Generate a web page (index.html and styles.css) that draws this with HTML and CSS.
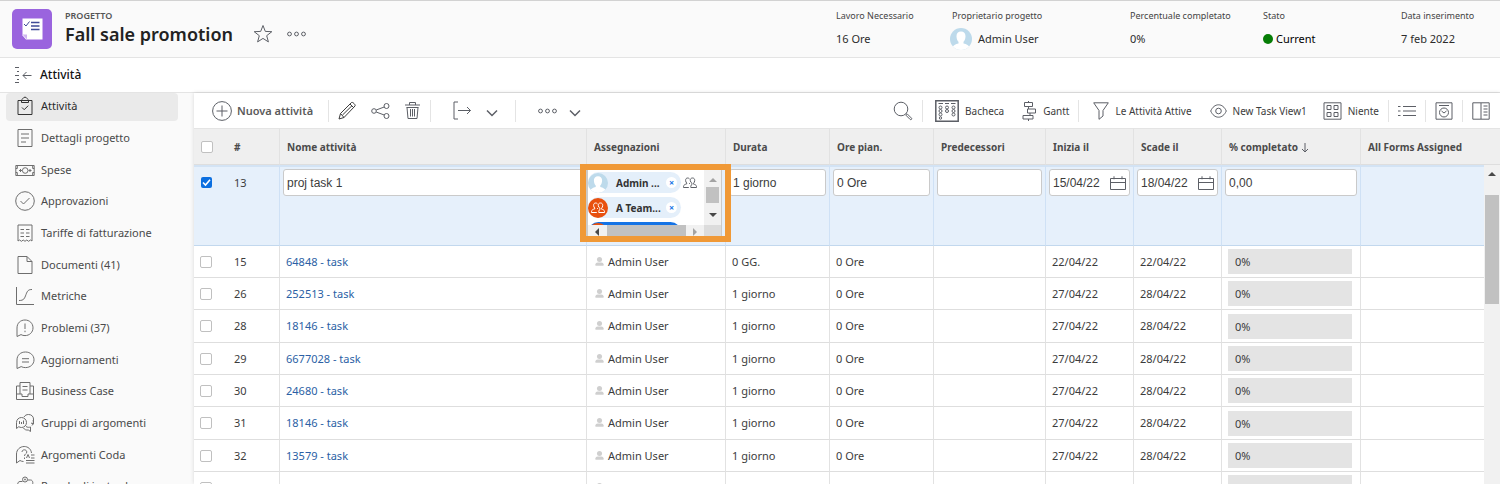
FILE: index.html
```html
<!DOCTYPE html>
<html lang="it">
<head>
<meta charset="utf-8">
<title>Fall sale promotion</title>
<link rel="stylesheet" href="styles.css">
</head>
<body>
<svg class="sprite" aria-hidden="true">
  <symbol id="person" viewBox="0 0 10 10"><circle cx="5" cy="2.8" r="2.8"/><path d="M.5 9.600V8Q.5 6.600 3 6.200h4q2.500.4 2.500 1.800v1.600z"/></symbol>
  <symbol id="avatar" viewBox="0 0 22 22"><defs><clipPath id="disc"><circle cx="11" cy="11" r="11"/></clipPath></defs><g clip-path="url(#disc)"><path fill="#bddaeb" d="M0 0h22v22H0z"/><path fill="#fff" d="M11 3.500c3 0 4.600 2 4.500 5-.1 2.600-1 4.300-2 5.300v1.600c3 .6 5.500 2 6.500 4.600V23H2v-3c1-2.600 3.500-4 6.500-4.600v-1.600c-1-1-1.900-2.700-2-5.300-.1-3 1.500-5 4.500-5z"/></g></symbol>
  <symbol id="team" viewBox="0 0 14 12"><path d="M9.500 1c1.600 0 2.300 1.100 2.200 2.600-.1 1.300-.6 2.100-1.200 2.700v.8c1.600.4 2.800 1 3 2.200v1.200H7.800V9.300C8 8.200 8.600 7.500 9 7.200v-.9C8 5.700 7.400 4.900 7.300 3.600 7.200 2.100 7.900 1 9.500 1zM6.500 1.900C6 1.300 5.400 1 4.700 1 3.200 1 2.500 2.100 2.600 3.500c.1 1.200.5 1.900 1.100 2.500v.9C2 7.300.7 8 .5 9.300v1.200h5.300M6.900 6.700l-.9-.5"/></symbol>
  <symbol id="calendar" viewBox="0 0 16 14"><path d="M.5 2.500h15v11H.5zM.5 6.500h15M4 .3v3M12 .3v3"/></symbol>
  <symbol id="chevron" viewBox="0 0 12 8"><path d="M1 1.500l5 5 5-5"/></symbol>
  <symbol id="dots" viewBox="0 0 19 6"><circle cx="2.500" cy="3" r="1.900"/><circle cx="9.500" cy="3" r="1.900"/><circle cx="16.500" cy="3" r="1.900"/></symbol>
</svg>

<header class="project">
  <svg class="logo" viewBox="0 0 40 40"><rect width="40" height="40" rx="5" fill="#9a64de"/><path d="M10.500 9.500h20v21H14l-3.500-4z" fill="#fff"/><path d="M10.500 25.500h4.500v5z" fill="#cfb5ef"/><path d="M12 15l2 2 3.500-4.500" fill="none" stroke="#3e4a96" stroke-width="1"/><path d="M19 13.500h8.500M19 17h8.500M19 20.500h8.500" stroke="#3e4a96" stroke-width="1.500"/></svg>
  <div class="heading">
    <div class="kind">PROGETTO</div>
    <h1>Fall sale promotion</h1>
  </div>
  <button class="plain star" aria-label="Preferito"><svg class="ic" width="20" height="20" viewBox="0 0 20 20"><path d="M10 1.500l2.300 5.900 6.500.3-5.100 4 1.700 6.200-5.400-3.500-5.400 3.500 1.700-6.200-5.100-4 6.500-.3z"/></svg></button>
  <button class="plain" aria-label="Altro"><svg class="ic" width="19" height="6"><use href="#dots"/></svg></button>
  <dl class="facts">
    <div><dt>Lavoro Necessario</dt><dd>16 Ore</dd></div>
    <div><dt>Proprietario progetto</dt><dd><svg class="face" width="22" height="22"><use href="#avatar"/></svg>Admin User</dd></div>
    <div><dt>Percentuale completato</dt><dd>0%</dd></div>
    <div><dt>Stato</dt><dd class="black"><span class="status"></span>Current</dd></div>
    <div><dt>Data inserimento</dt><dd>7 feb 2022</dd></div>
  </dl>
</header>

<div class="section">
  <button class="plain" aria-label="Comprimi"><svg class="ic" width="18" height="18" viewBox="0 0 18 18"><path d="M1 1.500h4M3 5.500h2M1 9.500h4M3 13.500h2M1 16.500h4M17.500 9.500H9M12.500 6L9 9.500l3.500 3.500"/></svg></button>
  <h2>Attività</h2>
</div>

<div class="workspace">
  <nav class="side">
    <a class="current" href="#"><svg class="ic" viewBox="0 0 20 20"><path d="M3 4.500h14v14H3zM6.500 4.500C6.500 3 8 3 8.200 2.300 8.500.8 11.500.8 11.800 2.300 12 3 13.500 3 13.500 4.500v2h-7zM7 11.500l2.200 2.200 4-4"/></svg>Attività</a>
    <a href="#"><svg class="ic" viewBox="0 0 20 20"><path d="M3 1.500h14v17H3zM6 6h8M6 10h8M6 14h5"/></svg>Dettagli progetto</a>
    <a href="#"><svg class="ic" viewBox="0 0 20 20"><path d="M.8 5.500h18.400v10H.8zM.8 8.500h1.500V5.500M17.700 5.500v3h1.500M.8 12.500h1.500v3M17.700 15.500v-3h1.500M4 10.500h3M5.500 9v3M13.500 10.500h3M15 9v3"/><circle cx="10.200" cy="10.500" r="2.800"/></svg>Spese</a>
    <a href="#"><svg class="ic" viewBox="0 0 20 20"><circle cx="10" cy="10" r="9.300"/><path d="M5.500 10l3 3 6-6"/></svg>Approvazioni</a>
    <a href="#"><svg class="ic" viewBox="0 0 20 20"><path d="M3 18V2h14v16l-1.500-1-2 1.300-1.700-1.300-1.800 1.300L8.200 17l-1.700 1.300-2-1.300zM5.500 6.500H9M11 6.500h3.500M5.500 10H9M11 10h3.500M5.500 13.500H9M11 13.500h3.500"/></svg>Tariffe di fatturazione</a>
    <a href="#"><svg class="ic" viewBox="0 0 20 20"><path d="M3 1.500h9l5 5v12H3zM12 1.500v5h5"/></svg>Documenti (41)</a>
    <a href="#"><svg class="ic" viewBox="0 0 20 20"><path d="M1.500 1v17.500H19M4 14.500c5 0 5.500-2 7-6s2.500-5 6-5"/></svg>Metriche</a>
    <a href="#"><svg class="ic" viewBox="0 0 20 20"><path d="M2 18.500V10c0-5 3.500-8 8-8s8 3.300 8 7.800-3.500 7.800-8 7.800c-1.500 0-2.800-.3-4-1zM10 5.500V11M10 12.700v1.500"/></svg>Problemi (37)</a>
    <a href="#"><svg class="ic" viewBox="0 0 20 20"><path d="M2 18.500V10c0-5 3.700-8 8.500-8s8.500 3.300 8.500 7.800-3.700 7.800-8.500 7.800c-1.600 0-3-.3-4.300-1zM7 8.700h7M7 12h7"/></svg>Aggiornamenti</a>
    <a href="#"><svg class="ic" viewBox="0 0 20 20"><path d="M5 13V1.500h10V13M5 5H1.500v13.500h17V5H15M1.500 13h5.500v2.500h6V13h5.500M7.500 5.500h5M7.500 9h5"/></svg>Business Case</a>
    <a href="#"><svg class="ic" viewBox="0 0 20 20"><path d="M1.500 15.500V9.500c0-3 2.300-5 5-5s5 2.200 5 5-2.200 5-5 5c-1 0-1.900-.3-2.700-.8zM9 4c1-1.700 2.500-2.500 4.500-2.500 3 0 5 2 5 4.500v5l-2.500-1M18 7c.5.600.7 4-1 5.500M11 13.500c1.500 1 3 1 4.500.5l0 4.500-2.200-1.500c-2 .3-3.800-.3-4.800-2M4.500 8v3M6.500 9v2M8.500 7.500V11"/></svg>Gruppi di argomenti</a>
    <a href="#"><svg class="ic" viewBox="0 0 20 20"><path d="M16.500 8C16 4 13 1.500 9.200 1.500 5 1.500 1.500 4.700 1.500 9v9l3.500-2.500c1 .6 2.200 1 3.500 1M7 7c0-3 4.800-2.800 4.800 0 0 2-2.300 1.800-2.300 4M9.500 12.500V14M11.500 13l1.500-3.500 1.500 3.500M16 10h3.500M16 13h3.500M11 15.500h8.500M11 18h8.500"/></svg>Argomenti Coda</a>
    <a href="#"><svg class="ic" viewBox="0 0 20 20"><circle cx="10" cy="3.500" r="2.500"/><circle cx="10" cy="3.500" r=".6"/><path d="M7.500 5.500H5c-3 0-3 5 0 5h9M12.500 4h3c3 0 3 5 .5 6"/></svg>Regole di instradam</a>
  </nav>

  <main class="content">
    <div class="toolbar">
      <button class="plain add"><svg class="ic" width="20" height="20" viewBox="0 0 20 20"><circle cx="10" cy="10" r="9.400"/><path d="M10 4.500v11M4.500 10h11"/></svg>Nuova attività</button>
      <span class="rule"></span>
      <div class="set edit">
        <button class="plain" aria-label="Modifica"><svg class="ic dark" width="19" height="19" viewBox="0 0 19 19"><path d="M1 18l1.500-5.500L13.500 1.500c1-1 4.500 2.500 3.500 3.500L6 16.500zM2.500 12.500L6 16.500M12 3l3.700 3.700M4.500 14L14 4.700"/></svg></button>
        <button class="plain" aria-label="Condividi"><svg class="ic" width="19" height="18" viewBox="0 0 19 18"><circle cx="3" cy="9" r="2.300"/><circle cx="15.500" cy="4" r="2.500"/><circle cx="15.500" cy="14" r="2.500"/><path d="M5.200 8l8-3M5.200 10l8 3"/></svg></button>
        <button class="plain" aria-label="Elimina"><svg class="ic" width="17" height="19" viewBox="0 0 17 19"><path d="M1 4h15M5.500 4V1.500h6V4M2.500 6.500h12M3 6.500l1 11h9l1-11M6.500 8v7.500M8.500 8v7.500M10.500 8v7.500"/></svg></button>
      </div>
      <span class="rule"></span>
      <div class="set export">
        <button class="plain" aria-label="Esporta"><svg class="ic" width="19" height="19" viewBox="0 0 19 19"><path d="M5 1H1v17h4M5 9.500h12.500M14 6l3.500 3.500L14 13"/></svg></button>
        <button class="plain low" aria-label="Opzioni esportazione"><svg class="ic strong" width="12" height="8"><use href="#chevron"/></svg></button>
      </div>
      <span class="rule"></span>
      <div class="set more">
        <button class="plain" aria-label="Altro"><svg class="ic" width="19" height="6"><use href="#dots"/></svg></button>
        <button class="plain low" aria-label="Altre opzioni"><svg class="ic strong" width="12" height="8"><use href="#chevron"/></svg></button>
      </div>

      <div class="views">
        <button class="plain" aria-label="Cerca"><svg class="ic" width="20" height="20" viewBox="0 0 20 20"><circle cx="8" cy="8" r="6.800"/><path d="M13 13.500l1-.8 4.500 4.500c.8.800-.5 2-1.300 1.300L12.700 14z"/></svg></button>
        <span class="rule"></span>
        <button class="plain board"><svg class="ic" width="24" height="22" viewBox="0 0 24 22"><path class="fat" d="M.8.800h22.400v20.400H.8z"/><path d="M3.500 3.500h4.500M10 3.500h4M16 3.500h4.500"/><circle cx="5.500" cy="7.500" r="1.500"/><circle cx="5.500" cy="11" r="1.500"/><circle cx="5.500" cy="14.500" r="1.500"/><circle cx="5.500" cy="18" r="1.200"/><circle cx="12" cy="7.500" r="1.500"/><circle cx="12" cy="11" r="1.500"/><circle cx="18.500" cy="7.500" r="1.500"/><circle cx="18.500" cy="11" r="1.500"/><circle cx="18.500" cy="14.500" r="1.500"/></svg>Bacheca</button>
        <button class="plain gantt"><svg class="ic" width="15" height="20" viewBox="0 0 15 20"><path d="M2.500 1.500h8v4h-8zM5.500 8h8v4h-8zM1 14.500h10v3.500H1zM6.500 5.500V8M8 12v2.500M6.500 0v1.500M6.500 18v2"/></svg>Gantt</button>
        <span class="rule"></span>
        <button class="plain filter"><svg class="ic" width="16" height="18" viewBox="0 0 16 18"><path d="M.7.800h14.600L10 8.500v5.500l-4 3.300V8.500z"/></svg>Le Attività Attive</button>
        <button class="plain eye"><svg class="ic" width="17" height="14" viewBox="0 0 17 14"><path d="M.7 7C2.500 3 5.300.8 8.500.8S14.500 3 16.300 7c-1.800 4-4.600 6.200-7.800 6.200S2.500 11 .7 7z"/><circle cx="8.500" cy="7" r="2.800"/></svg>New Task View1</button>
        <button class="plain group"><svg class="ic" width="19" height="18" viewBox="0 0 19 18"><path d="M1 .8h17v16.400H1zM4 3.500h4v4H4zM11 3.500h4v4h-4zM4 10.500h4v4H4zM11 10.500h4v4h-4z"/></svg>Niente</button>
        <span class="rule"></span>
        <button class="plain" aria-label="Elenco"><svg class="ic" width="18" height="12" viewBox="0 0 18 12"><path d="M0 1.500h2.500M0 6h2.500M0 10.500h2.500M5 1.500h13M5 6h13M5 10.500h13"/></svg></button>
        <span class="rule"></span>
        <button class="plain" aria-label="Linea temporale"><svg class="ic" width="18" height="18" viewBox="0 0 18 18"><path d="M1 .8h16v16.400H1zM4 3.500h10M6.500 9l2.500 2 2.500-2"/><circle cx="9" cy="10.500" r="4.500"/></svg></button>
        <span class="rule"></span>
        <button class="plain" aria-label="Riepilogo"><svg class="ic" width="18" height="18" viewBox="0 0 18 18"><path d="M.8.800h16.400v16.400H.8zM9 1v16M11.500 4h4M11.500 7h4M11.500 10h4M11.500 13h4"/></svg></button>
      </div>
    </div>

    <div class="sheet">
      <table>
        <colgroup><col class="c-check"><col class="c-num"><col><col class="c-assign"><col class="c-dur"><col class="c-dur"><col class="c-pred"><col class="c-date"><col class="c-date"><col class="c-pct"><col class="c-form"></colgroup>
        <thead>
          <tr><th><input type="checkbox" aria-label="Seleziona tutto"></th><th>#</th><th>Nome attività</th><th>Assegnazioni</th><th>Durata</th><th>Ore pian.</th><th>Predecessori</th><th>Inizia il</th><th>Scade il</th><th>% completato <svg class="ic sort" width="8" height="10" viewBox="0 0 8 10"><path d="M4 0v9M1 6l3 3 3-3"/></svg></th><th>All Forms Assigned</th></tr>
        </thead>
        <tbody>
          <tr class="editing">
            <td><input type="checkbox" checked aria-label="Seleziona 13"></td>
            <td>13</td>
            <td><input class="field name" type="text" value="proj task 1" aria-label="Nome attività"></td>
            <td class="assign">
              <div class="callout">
                <div class="picker">
                  <div class="chips">
                    <div class="line"><span class="chip"><svg class="badge" width="20" height="20"><use href="#avatar"/></svg><b>Admin ...</b><button class="remove" aria-label="Rimuovi Admin">×</button></span><svg class="ic" width="14" height="12"><use href="#team"/></svg></div>
                    <div class="line"><span class="chip"><span class="badge red"><svg class="ic" width="14" height="12"><use href="#team"/></svg></span><b>A Team...</b><button class="remove" aria-label="Rimuovi A Team">×</button></span></div>
                    <div class="line"><span class="chip picked"><span class="badge red"></span></span></div>
                  </div>
                  <div class="vbar"><i class="up dim"></i><i class="thumb"></i><i class="down"></i></div>
                  <div class="hbar"><i class="left"></i><i class="thumb"></i><i class="right dim"></i></div>
                  <div class="corner"></div>
                </div>
              </div>
            </td>
            <td><input class="field" type="text" value="1 giorno" aria-label="Durata"></td>
            <td><input class="field" type="text" value="0 Ore" aria-label="Ore pianificate"></td>
            <td><input class="field" type="text" aria-label="Predecessori"></td>
            <td><div class="date"><input class="field" type="text" value="15/04/22" aria-label="Inizia il"><svg class="ic" width="16" height="14"><use href="#calendar"/></svg></div></td>
            <td><div class="date"><input class="field" type="text" value="18/04/22" aria-label="Scade il"><svg class="ic" width="16" height="14"><use href="#calendar"/></svg></div></td>
            <td><input class="field" type="text" value="0,00" aria-label="% completato"></td>
            <td></td>
          </tr>
          <tr><td><input type="checkbox" aria-label="Seleziona 15"></td><td>15</td><td><a href="#">64848 - task</a></td><td><svg class="user" width="9" height="9"><use href="#person"/></svg>Admin User</td><td>0 GG.</td><td>0 Ore</td><td></td><td>22/04/22</td><td>22/04/22</td><td><div class="bar">0%</div></td><td></td></tr>
          <tr><td><input type="checkbox" aria-label="Seleziona 26"></td><td>26</td><td><a href="#">252513 - task</a></td><td><svg class="user" width="9" height="9"><use href="#person"/></svg>Admin User</td><td>1 giorno</td><td>0 Ore</td><td></td><td>27/04/22</td><td>28/04/22</td><td><div class="bar">0%</div></td><td></td></tr>
          <tr><td><input type="checkbox" aria-label="Seleziona 28"></td><td>28</td><td><a href="#">18146 - task</a></td><td><svg class="user" width="9" height="9"><use href="#person"/></svg>Admin User</td><td>1 giorno</td><td>0 Ore</td><td></td><td>27/04/22</td><td>28/04/22</td><td><div class="bar">0%</div></td><td></td></tr>
          <tr><td><input type="checkbox" aria-label="Seleziona 29"></td><td>29</td><td><a href="#">6677028 - task</a></td><td><svg class="user" width="9" height="9"><use href="#person"/></svg>Admin User</td><td>1 giorno</td><td>0 Ore</td><td></td><td>27/04/22</td><td>28/04/22</td><td><div class="bar">0%</div></td><td></td></tr>
          <tr><td><input type="checkbox" aria-label="Seleziona 30"></td><td>30</td><td><a href="#">24680 - task</a></td><td><svg class="user" width="9" height="9"><use href="#person"/></svg>Admin User</td><td>1 giorno</td><td>0 Ore</td><td></td><td>27/04/22</td><td>28/04/22</td><td><div class="bar">0%</div></td><td></td></tr>
          <tr><td><input type="checkbox" aria-label="Seleziona 31"></td><td>31</td><td><a href="#">18146 - task</a></td><td><svg class="user" width="9" height="9"><use href="#person"/></svg>Admin User</td><td>1 giorno</td><td>0 Ore</td><td></td><td>27/04/22</td><td>28/04/22</td><td><div class="bar">0%</div></td><td></td></tr>
          <tr><td><input type="checkbox" aria-label="Seleziona 32"></td><td>32</td><td><a href="#">13579 - task</a></td><td><svg class="user" width="9" height="9"><use href="#person"/></svg>Admin User</td><td>1 giorno</td><td>0 Ore</td><td></td><td>27/04/22</td><td>28/04/22</td><td><div class="bar">0%</div></td><td></td></tr>
          <tr><td><input type="checkbox" aria-label="Seleziona 33"></td><td>33</td><td><a href="#">18146 - task</a></td><td><svg class="user" width="9" height="9"><use href="#person"/></svg>Admin User</td><td>1 giorno</td><td>0 Ore</td><td></td><td>27/04/22</td><td>28/04/22</td><td><div class="bar">0%</div></td><td></td></tr>
        </tbody>
      </table>
      <div class="scroll"><div class="cap"></div><div class="track"><i class="up"></i><i class="thumb"></i></div></div>
    </div>
  </main>
</div>
</body>
</html>
```
FILE: styles.css
```css
* { box-sizing: border-box; }
body {
  margin: 0;
  height: 100vh;
  display: flex;
  flex-direction: column;
  overflow: hidden;
  background: #fff;
  color: #3c3c3c;
  font: 11px/16px "Noto Sans", "Open Sans", sans-serif;
}
h1, h2, dl, dd { margin: 0; font-weight: 400; }
a { color: inherit; text-decoration: none; }
.sprite { position: absolute; width: 0; height: 0; }
.ic { fill: none; stroke: #5c5f66; stroke-width: 1; flex: none; display: block; }
.ic .fat { stroke-width: 1.5; }
.ic.strong { stroke-width: 1.5; }
.ic.dark { stroke: #3c3c3c; }
.plain {
  display: flex;
  align-items: center;
  padding: 0;
  border: 0;
  background: none;
  color: inherit;
  font: inherit;
  white-space: nowrap;
}

/* Project header */
.project {
  flex: none;
  display: flex;
  align-items: center;
  height: 58px;
  padding-left: 12px;
  border-top: 1px solid #d2d2d2;
  border-bottom: 1px solid #e4e4e4;
  background: #fafafa;
}
.logo { width: 40px; height: 40px; }
.heading { margin: 0 20px 2px 13px; }
.kind { font-size: 9px; line-height: 12px; font-weight: 600; color: #555; }
h1 { font-size: 18px; line-height: 24px; font-weight: 600; color: #222; white-space: nowrap; }
.star { margin: 10px 14px 0 0; }
.star + .plain { margin-top: 10px; }
.facts {
  margin-left: auto;
  display: grid;
  grid-template-columns: 116px 178px 133px 138px 99px;
}
.facts dt { font-size: 9px; line-height: 16px; color: #444; }
.facts dd { display: flex; align-items: center; height: 24px; margin-top: 3px; color: #2c2c2c; }
.facts .black { color: #000; }
.face { margin: 0 6px 0 -2px; }
.status { width: 10px; height: 10px; margin-right: 3px; border-radius: 50%; background: #067d06; }

.section {
  flex: none;
  display: flex;
  align-items: center;
  gap: 8px;
  height: 35px;
  padding-left: 14px;
  border-bottom: 1px solid #e4e4e4;
}
h2 { font-size: 12px; font-weight: 500; color: #111; }

.workspace { flex: 1; min-height: 0; display: flex; }

/* Side navigation */
.side {
  flex: none;
  width: 194px;
  padding: 0 16px 0 6px;
  overflow: hidden;
  background: #fafafa;
  color: #4a4a4a;
}
.side a {
  display: flex;
  align-items: center;
  gap: 6px;
  height: 28px;
  margin-bottom: 4px;
  padding: 0 0 2px 9px;
  border-radius: 4px;
}
.side a:nth-child(3n) { margin-bottom: 3px; }
.side .current { background: #eaeaea; color: #2c2c2c; }
.side .ic { width: 20px; height: 20px; stroke: #6e6e6e; }
.side .current .ic { stroke: #333; }

.content {
  flex: 1;
  min-width: 0;
  display: flex;
  flex-direction: column;
  overflow: hidden;
  box-shadow: 0 0 4px rgba(0, 0, 0, .14);
}

/* Toolbar */
.toolbar {
  flex: none;
  display: flex;
  align-items: center;
  height: 35px;
  padding: 0 10px 0 18px;
}
.toolbar .rule { width: 1px; height: 22px; background: #e4e4e4; }
.add { gap: 5px; margin-right: 15px; font-weight: 600; color: #5a5a5a; }
.set { display: flex; align-items: center; }
.edit { gap: 14px; padding: 0 9px; }
.export { gap: 14px; padding: 0 17px 0 22px; }
.more { gap: 12px; padding-left: 22px; }
.low { padding-top: 4px; }
.views { display: flex; align-items: center; gap: 9px; margin-left: auto; font-size: 10px; }
.views .plain { gap: 6px; }
.views .board { margin-left: 3px; }
.views .filter { margin-left: 5px; }
.views .gantt, .views .eye { margin-left: 9px; }
.views .group { margin-left: 7px; }

/* Task table */
.sheet { flex: 1; min-height: 0; display: grid; grid-template-columns: 1fr 16px; align-items: start; }
table { width: 100%; table-layout: fixed; border-collapse: separate; border-spacing: 0; }
.c-check { width: 32px; }
.c-num { width: 54px; }
.c-assign { width: 139px; }
.c-dur { width: 104px; }
.c-pred { width: 112px; }
.c-date { width: 88px; }
.c-pct { width: 139px; }
.c-form { width: 123px; }
th, td { height: 32px; padding: 0 0 0 6px; border-right: 1px solid #e2e2e2; border-bottom: 1px solid #dedede; text-align: left; white-space: nowrap; }
th:first-child, td:first-child { border-right: 0; }
th:last-child, td:last-child { border-right: 0; }
th {
  height: 37px;
  padding-left: 7px;
  border-top: 1px solid #e4e4e4;
  background: #efefef;
  color: #4b4b4b;
  font-size: 10px;
  font-weight: 700;
}
tr > :nth-child(2) { padding-left: 8px; }
th .sort { display: inline-block; vertical-align: middle; }
tbody tr:nth-child(3n + 1) td { height: 33px; }
tbody a { color: #2b5fa5; }
input[type="checkbox"] {
  display: block;
  appearance: none;
  width: 12px;
  height: 12px;
  margin: 0;
  border: 1px solid #c0c0c0;
  border-radius: 2px;
  background: #fff;
}
input[type="checkbox"]:checked {
  width: 11px;
  height: 11px;
  border: 0;
  background: #0b6fe0 url("data:image/svg+xml,%3Csvg xmlns='http://www.w3.org/2000/svg' viewBox='0 0 11 11'%3E%3Cpath d='M2 5.500l2.500 2.500L9 2.800' fill='none' stroke='white' stroke-width='1.600'/%3E%3C/svg%3E");
}
.user { margin: 0 4px 0 2px; fill: #cfcfcf; }
.bar { height: 25px; margin-right: 8px; padding-left: 7px; line-height: 25px; background: #e4e4e4; }

/* Row being edited */
tbody tr.editing td {
  height: 81px;
  padding: 2px 3px 0;
  border-top: 2px solid #d3e3f4;
  border-right-color: #cfe1f5;
  border-bottom-color: #c2d8ee;
  background: #e6f0fb;
  vertical-align: top;
}
tbody tr.editing td:first-child { padding: 10px 0 0 7px; }
tbody tr.editing td:nth-child(2) { padding: 8px 0 0 8px; }
.field {
  display: block;
  width: 100%;
  height: 27px;
  padding: 0 3px;
  border: 1px solid #cacaca;
  border-radius: 3px;
  background: #fff;
  color: #3c3c3c;
  font: 12px/24px "Liberation Sans", Arial, sans-serif;
}
.date { position: relative; }
.date .ic { position: absolute; right: 4px; top: 7px; }

.assign { position: relative; }
.callout {
  position: absolute;
  z-index: 1;
  top: -3px;
  left: -7px;
  width: 151px;
  height: 78px;
  border: 6px solid #f09937;
  background: #e6f0fb;
}
.picker {
  display: grid;
  grid-template: 55px 11px / 116px 17px;
  width: 136px;
  height: 66px;
  border: 0 solid #cacaca;
  border-width: 0 1px 0 2px;
  overflow: hidden;
}
.chips { overflow: hidden; background: #fff; }
.line { display: flex; align-items: center; gap: 2px; height: 25px; }
.chip {
  display: flex;
  align-items: center;
  width: 93px;
  height: 21px;
  border-radius: 11px;
  background: #e4effa;
  color: #333;
  font-size: 10px;
}
.chip b { flex: 1; margin-left: 8px; }
.badge { flex: none; width: 20px; height: 20px; }
.badge.red { display: grid; place-items: center; border-radius: 50%; background: #e8500f; }
.badge .ic { stroke: #fff; }
.picked { background: #1473e6; }
.remove {
  width: 11px;
  height: 11px;
  margin-right: 4px;
  padding: 0;
  border: 0;
  border-radius: 50%;
  background: #fff;
  color: #1473e6;
  font: 700 9px/11px "Noto Sans", sans-serif;
}

/* Scroll bars */
.vbar, .hbar, .track { display: flex; background: #f1f1f1; }
.vbar { flex-direction: column; align-items: center; }
.hbar { align-items: center; }
.corner { background: #dcdcdc; }
.thumb { background: #c1c1c1; }
.up, .down { width: 0; height: 0; border: 4px solid transparent; border-top-width: 0; border-bottom-color: #484848; }
.down { border-width: 4px 4px 0; border-color: #484848 transparent transparent; }
.left, .right { width: 0; height: 0; border: 4px solid transparent; border-left-width: 0; border-right-color: #484848; }
.right { border-width: 4px 0 4px 4px; border-color: transparent transparent transparent #484848; }
.up.dim { border-bottom-color: #a3a3a3; }
.right.dim { border-left-color: #a3a3a3; }
.vbar .up { margin: 8px 0 5px; }
.vbar .thumb { width: 13px; height: 16px; }
.vbar .down { margin-top: 10px; }
.hbar .left { margin: 2px 8px 0 7px; }
.hbar .thumb { width: 79px; height: 11px; }
.hbar .right { margin: 2px 0 0 7px; }
.scroll { display: flex; flex-direction: column; height: 100%; }
.cap { height: 37px; border-top: 1px solid #e4e4e4; border-bottom: 1px solid #dedede; background: #efefef; }
.track { flex: 1; flex-direction: column; align-items: center; }
.track .up { margin: 7px 0 19px; }
.track .thumb { width: 14px; height: 109px; }
```
